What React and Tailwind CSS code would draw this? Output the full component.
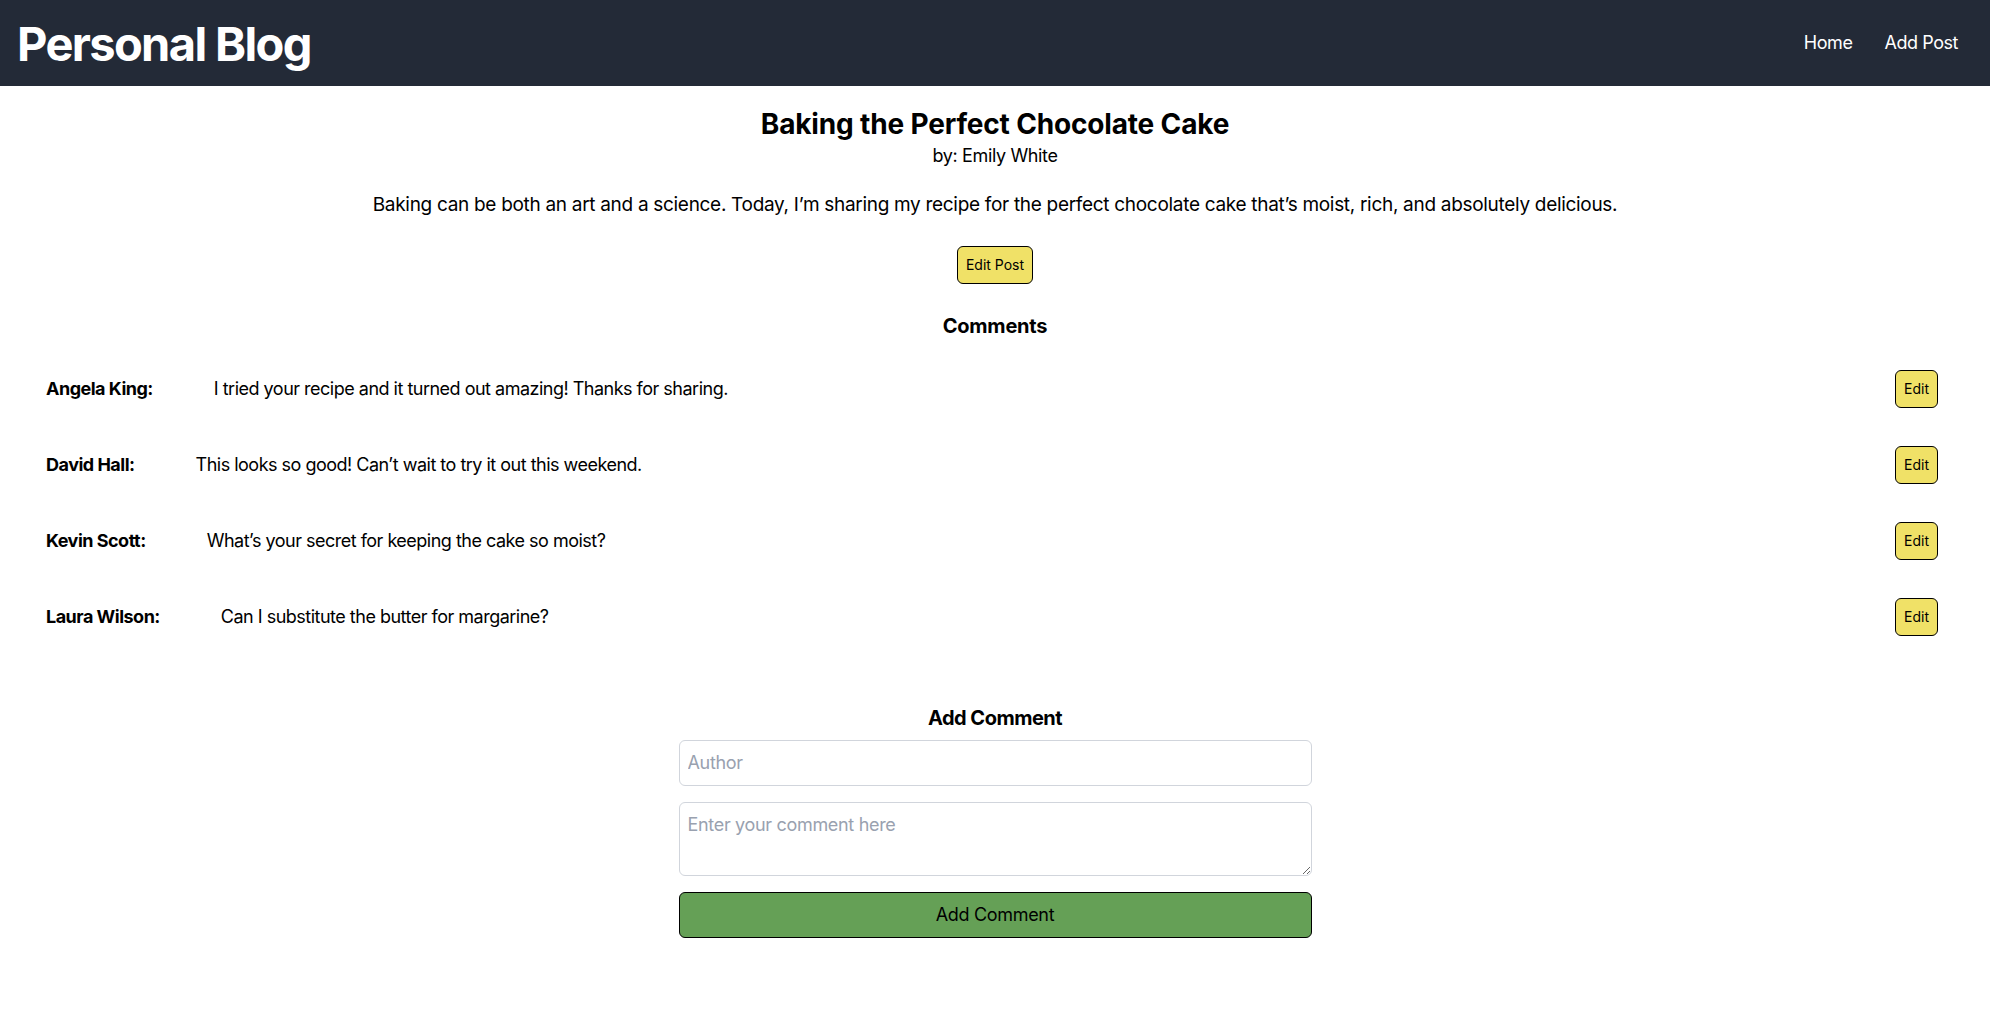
import React from "react";

const comments = [
	{ author: "Angela King", text: "I tried your recipe and it turned out amazing! Thanks for sharing." },
	{ author: "David Hall", text: "This looks so good! Can’t wait to try it out this weekend." },
	{ author: "Kevin Scott", text: "What’s your secret for keeping the cake so moist?" },
	{ author: "Laura Wilson", text: "Can I substitute the butter for margarine?" },
];

const Header = () => {
	return (
		<header className="h-[86px] bg-[#232a37] text-white flex items-center justify-between pl-[17px] pr-4">
			<h1 className="text-[47px] leading-none font-bold tracking-[-0.035em]">
				Personal Blog
			</h1>
			<nav className="flex items-center text-lg tracking-[-0.025em]">
				<a href="#" className="px-4">
					Home
				</a>
				<a href="#" className="px-4">
					Add Post
				</a>
			</nav>
		</header>
	);
};

const CommentRow = ({ comment }) => {
	return (
		<div className="flex items-center justify-between h-[76px]">
			<div className="flex items-center text-lg tracking-[-0.028em]">
				<strong className="font-bold">{comment.author}:</strong>
				<span className="ml-[61px]">{comment.text}</span>
			</div>
			<button className="px-2 py-2 text-sm border border-black rounded-md bg-[#f0e167]">
				Edit
			</button>
		</div>
	);
};

export default function App() {
	return (
		<div className="min-h-screen bg-white text-black font-['Inter',sans-serif]">
			<Header />

			<main>
				<div className="flex flex-col items-center text-center pt-5">
					<h2 className="text-[28px] leading-9 font-bold tracking-[-0.006em]">
						Baking the Perfect Chocolate Cake
					</h2>
					<div className="text-lg leading-7 tracking-[-0.02em]">by: Emily White</div>
					<p className="text-[19px] leading-7 mt-[21px] tracking-[-0.016em]">
						Baking can be both an art and a science. Today, I’m sharing my recipe for the perfect chocolate cake that’s moist, rich, and absolutely delicious.
					</p>
					<button className="mt-[27px] px-2 py-2 text-sm border border-black rounded-md bg-[#f0e167]">
						Edit Post
					</button>
					<h3 className="mt-[28px] text-xl leading-7 font-bold tracking-[-0.01em]">
						Comments
					</h3>
				</div>

				<div className="mt-[11px] pl-[46px] pr-[52px]">
					{comments.map((c) => (
						<CommentRow key={c.author} comment={c} />
					))}
				</div>

				{/* add comment form */}
				<div className="mt-[49px] flex flex-col items-center">
					<h3 className="text-xl leading-7 font-bold tracking-[-0.025em]">Add Comment</h3>
					<form className="w-[633px] mt-2 flex flex-col gap-4 tracking-[-0.02em]">
						<input
							type="text"
							placeholder="Author"
							className="w-full p-2 text-lg border border-gray-300 rounded-md placeholder:text-gray-400 outline-none"
						/>
						<textarea
							placeholder="Enter your comment here"
							className="w-full p-2 text-lg border border-gray-300 rounded-md placeholder:text-gray-400 outline-none"
						></textarea>
						<button
							type="button"
							className="w-full p-2 text-lg border border-black rounded-md bg-[#65a056]"
						>
							Add Comment
						</button>
					</form>
				</div>
			</main>
		</div>
	);
}
